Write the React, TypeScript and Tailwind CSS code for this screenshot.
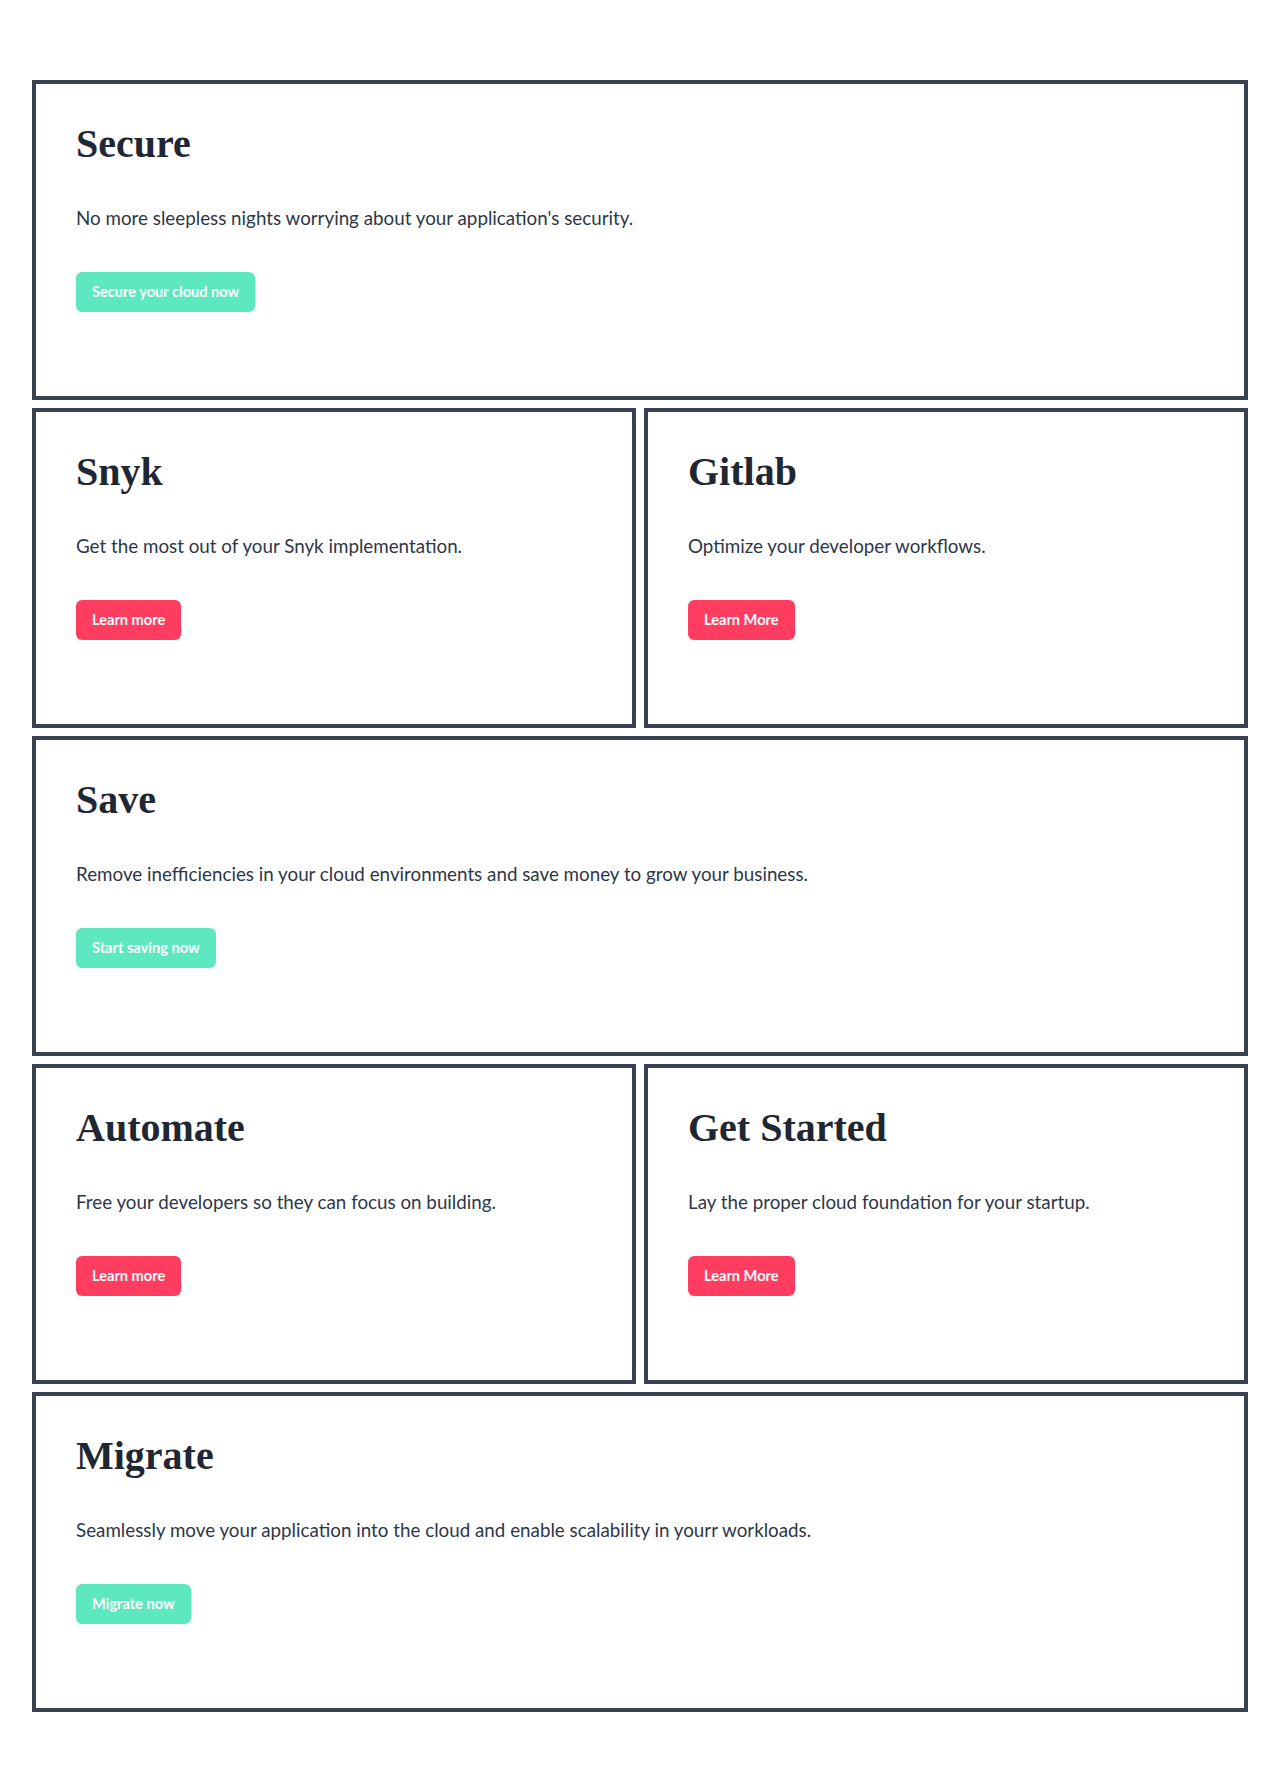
import React from "react";

type Card = {
  title: string;
  text: string;
  cta: string;
  color: "teal" | "red";
};

const CardBox = ({ card }: { card: Card }) => (
  <div className="h-[320px] border-4 border-[#394150] bg-white px-10 pt-10 flex flex-col items-start">
    <h2 className="text-[40px] leading-[40px] font-bold text-[#1f2733]" style={{ fontFamily: '"Liberation Serif", serif' }}>
      {card.title}
    </h2>
    <p className="mt-10 text-[18.8px] leading-[28px] text-[#2d3748]" style={{ fontFamily: 'Lato, "Open Sans", sans-serif' }}>
      {card.text}
    </p>
    <button
      className={
        "mt-10 h-10 px-4 rounded-md text-[14.6px] font-bold text-white " +
        (card.color === "teal" ? "bg-[#5ee8bf]" : "bg-[#ff3d60]")
      }
      style={{ fontFamily: 'Lato, "Open Sans", sans-serif' }}
    >
      {card.cta}
    </button>
  </div>
);

export default function App() {
  const secure: Card = { title: "Secure", text: "No more sleepless nights worrying about your application's security.", cta: "Secure your cloud now", color: "teal" };
  const snyk: Card = { title: "Snyk", text: "Get the most out of your Snyk implementation.", cta: "Learn more", color: "red" };
  const gitlab: Card = { title: "Gitlab", text: "Optimize your developer workflows.", cta: "Learn More", color: "red" };
  const save: Card = { title: "Save", text: "Remove inefficiencies in your cloud environments and save money to grow your business.", cta: "Start saving now", color: "teal" };
  const automate: Card = { title: "Automate", text: "Free your developers so they can focus on building.", cta: "Learn more", color: "red" };
  const started: Card = { title: "Get Started", text: "Lay the proper cloud foundation for your startup.", cta: "Learn More", color: "red" };
  const migrate: Card = { title: "Migrate", text: "Seamlessly move your application into the cloud and enable scalability in yourr workloads.", cta: "Migrate now", color: "teal" };

  return (
    <div className="min-h-[1792px] bg-white px-8 pt-20 pb-20">
      <div className="flex flex-col gap-2">
        <CardBox card={secure} />
        <div className="grid grid-cols-2 gap-2">
          <CardBox card={snyk} />
          <CardBox card={gitlab} />
        </div>
        <CardBox card={save} />
        <div className="grid grid-cols-2 gap-2">
          <CardBox card={automate} />
          <CardBox card={started} />
        </div>
        <CardBox card={migrate} />
      </div>
    </div>
  );
}
